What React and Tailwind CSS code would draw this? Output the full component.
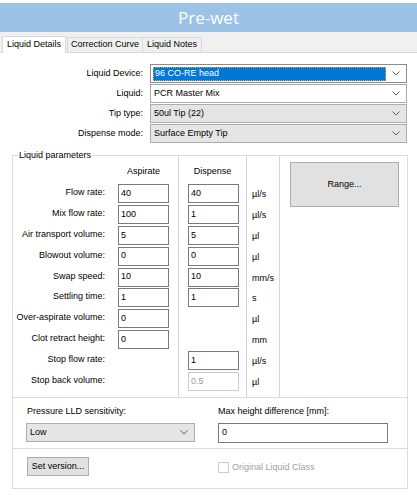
import React from 'react';

const FONT = { fontFamily: '"Liberation Sans", Arial, sans-serif' };

const PARAMS = [
  { label: 'Flow rate:', a: '40', d: '40', unit: 'µl/s' },
  { label: 'Mix flow rate:', a: '100', d: '1', unit: 'µl/s' },
  { label: 'Air transport volume:', a: '5', d: '5', unit: 'µl' },
  { label: 'Blowout volume:', a: '0', d: '0', unit: 'µl' },
  { label: 'Swap speed:', a: '10', d: '10', unit: 'mm/s' },
  { label: 'Settling time:', a: '1', d: '1', unit: 's' },
  { label: 'Over-aspirate volume:', a: '0', unit: 'µl' },
  { label: 'Clot retract height:', a: '0', unit: 'mm' },
  { label: 'Stop flow rate:', d: '1', unit: 'µl/s' },
  { label: 'Stop back volume:', d: '0.5', disabled: true, unit: 'µl' },
];

function Chevron() {
  return (
    <svg width="8" height="5" viewBox="0 0 8 5" className="flex-shrink-0">
      <polyline points="0.5,0.5 4,4 7.5,0.5" fill="none" stroke="#606060" strokeWidth="1" />
    </svg>
  );
}

function Combo({ value, variant }) {
  const box = {
    focus: 'bg-white border-[#8c8c8c]',
    white: 'bg-white border-[#a8a8a8]',
    gray: 'bg-[#e5e5e5] border-[#adadad]',
  }[variant];
  return (
    <div className={`h-[19px] w-full border flex items-center pl-[2px] pr-[6px] gap-[6px] ${box}`}>
      {variant === 'focus' ? (
        <span className="flex-1 h-[14px] bg-[#0078d7] text-white border border-dotted border-[#e8a040] flex items-center pl-[1px]">{value}</span>
      ) : (
        <span className="flex-1 pl-[1px]">{value}</span>
      )}
      <Chevron />
    </div>
  );
}

function Field({ value, disabled }) {
  return (
    <div className={`w-[51px] h-[19px] border flex items-center pl-[2px] ${disabled ? 'border-[#cccccc] text-[#9a9a9a]' : 'border-[#7a7a7a] bg-white'}`}>
      {value}
    </div>
  );
}

function FormRow({ label, children }) {
  return (
    <div className="flex items-center h-[19px]">
      <div className="w-[143px] text-right">{label}</div>
      <div className="ml-[7px] w-[257px]">{children}</div>
    </div>
  );
}

export default function App() {
  return (
    <div className="w-[417px] h-[500px] bg-white text-[9px] text-black overflow-hidden" style={FONT}>
      {/* title */}
      <div className="mt-[3px] h-[29px] bg-[#9cc2e5] flex items-center justify-center">
        <span className="text-white text-[17px]" style={{ fontFamily: '"Open Sans", sans-serif' }}>Pre-wet</span>
      </div>

      {/* tabs */}
      <div className="h-[21px] bg-[#f0f0f0] border-b border-[#d9d9d9] flex items-end pl-[2px]">
        <div className="h-[17px] px-[4px] bg-white border border-b-0 border-[#d9d9d9] flex items-center -mb-px relative">Liquid Details</div>
        <div className="h-[15px] px-[3px] ml-[1px] border border-b-0 border-[#d9d9d9] flex items-center">Correction Curve</div>
        <div className="h-[15px] px-[4px] border border-b-0 border-l-0 border-[#d9d9d9] flex items-center">Liquid Notes</div>
      </div>

      {/* device / liquid selection */}
      <div className="pt-[11px] flex flex-col gap-[1px]">
        <FormRow label="Liquid Device:"><Combo value="96 CO-RE head" variant="focus" /></FormRow>
        <FormRow label="Liquid:"><Combo value="PCR Master Mix" variant="white" /></FormRow>
        <FormRow label="Tip type:"><Combo value="50ul Tip (22)" variant="gray" /></FormRow>
        <FormRow label="Dispense mode:"><Combo value="Surface Empty Tip" variant="gray" /></FormRow>
      </div>

      {/* liquid parameters group */}
      <div className="relative mt-[12px] ml-[12px] w-[396px] border border-[#dcdcdc]">
        <span className="absolute -top-[6px] left-[5px] bg-white px-[1px] leading-[11px]">Liquid parameters</span>

        <div className="h-[242px] border-b border-[#dcdcdc] flex">
          {/* labels + aspirate */}
          <div className="w-[166px] border-r border-[#d5d5d5]">
            <div className="h-[28px] pt-[9px] pl-[105px] w-[156px] text-center">Aspirate</div>
            {PARAMS.map(p => (
              <div key={p.label} className="h-[20.9px] flex items-start">
                <div className="w-[92px] text-right pt-[3px] leading-[11px]">{p.label}</div>
                <div className="ml-[13px]">{p.a !== undefined && <Field value={p.a} />}</div>
              </div>
            ))}
          </div>

          {/* dispense */}
          <div className="w-[68px] border-r border-[#d5d5d5]">
            <div className="h-[28px] pt-[9px] text-center">Dispense</div>
            {PARAMS.map(p => (
              <div key={p.label} className="h-[20.9px] pl-[9px]">
                {p.d !== undefined && <Field value={p.d} disabled={p.disabled} />}
              </div>
            ))}
          </div>

          {/* units */}
          <div className="w-[33px] border-r border-[#d5d5d5]">
            <div className="h-[28px]" />
            {PARAMS.map(p => (
              <div key={p.label} className="h-[20.9px] pl-[5px] pt-[5px] leading-[11px]">{p.unit}</div>
            ))}
          </div>

          {/* range */}
          <div className="flex-1 pt-[6px] pl-[10px] pr-[8px]">
            <div className="h-[45px] bg-[#e1e1e1] border border-[#adadad] flex items-center justify-center">Range...</div>
          </div>
        </div>

        {/* pressure LLD */}
        <div className="h-[51px] border-b border-[#dcdcdc] pt-[8px] pl-[13px] flex">
          <div className="w-[169px]">
            <div className="h-[11px] leading-[11px] pl-[1px]">Pressure LLD sensitivity:</div>
            <div className="mt-[6px]"><Combo value="Low" variant="gray" /></div>
          </div>
          <div className="ml-[23px] w-[170px]">
            <div className="h-[11px] leading-[11px]">Max height difference [mm]:</div>
            <div className="mt-[6px] h-[20px] border border-[#7a7a7a] bg-white flex items-center pl-[3px]">0</div>
          </div>
        </div>

        {/* bottom */}
        <div className="h-[39px] pt-[8px] pl-[14px] flex items-start">
          <div className="w-[62px] h-[19px] bg-[#e1e1e1] border border-[#adadad] flex items-center justify-center">Set version...</div>
          <div className="ml-[129px] mt-[4px] flex items-center gap-[3px] text-[#a0a0a0]">
            <span className="w-[11px] h-[11px] border border-[#cccccc] bg-white" />
            <span>Original Liquid Class</span>
          </div>
        </div>
      </div>
    </div>
  );
}
